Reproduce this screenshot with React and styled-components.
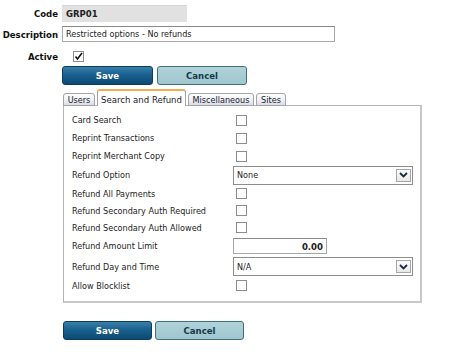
import styled, { createGlobalStyle } from "styled-components";

const GlobalStyle = createGlobalStyle`
	body {
		margin: 0;
		background: #ffffff;
		font-family: "DejaVu Sans Condensed", "Liberation Sans", sans-serif;
		font-size: 9px;
		color: #1e1e1e;
	}
`;

const Page = styled.div`
	width: 451px;
	height: 354px;
	padding-top: 5px;
	box-sizing: border-box;
`;

const Field = styled.div`
	display: flex;
	align-items: center;
	gap: 4px;
	height: ${(props) => props.h}px;
	margin-bottom: ${(props) => props.mb || 0}px;
`;

const Label = styled.label`
	width: 58px;
	text-align: right;
	font-weight: bold;
	font-size: 9.5px;
	color: #111;
`;

const TextBox = styled.div`
	box-sizing: border-box;
	height: 100%;
	width: ${(props) => props.w}px;
	display: flex;
	align-items: center;
	padding: 0 3px;
	background: ${(props) => (props.readOnly ? "#e1e1e1" : "#fff")};
	border: 1px solid ${(props) => (props.readOnly ? "#e1e1e1" : "#a8a8a8")};
	border-top-color: ${(props) => (props.readOnly ? "#d4d4d4" : "#8a8a8a")};
	font-weight: ${(props) => (props.bold ? "bold" : "normal")};
	font-size: ${(props) => (props.bold ? "9.5px" : "9px")};
	color: #222;
	justify-content: ${(props) => (props.right ? "flex-end" : "flex-start")};
`;

const Check = styled.span`
	box-sizing: border-box;
	width: 11px;
	height: 11px;
	margin-left: ${(props) => props.ml || 0}px;
	border: 1px solid #8c8c8c;
	background: #fff;
	display: inline-flex;
	align-items: center;
	justify-content: center;
`;

const Buttons = styled.div`
	display: flex;
	gap: ${(props) => props.gap}px;
	margin-left: ${(props) => props.ml}px;
	height: 19px;
`;

const Button = styled.button`
	box-sizing: border-box;
	width: ${(props) => props.w}px;
	height: 19px;
	border-radius: 3px;
	font-family: inherit;
	font-size: 9.5px;
	font-weight: bold;
	padding: 0;
	cursor: pointer;
	border: 1px solid ${(props) => (props.primary ? "#0b3b5e" : "#3f6f7f")};
	color: ${(props) => (props.primary ? "#ffffff" : "#16384a")};
	background: ${(props) =>
		props.primary
			? "linear-gradient(#3a7fa9, #19608e 45%, #0c4a73)"
			: "linear-gradient(#b0d2d9, #9fc6ce)"};
`;

const Tabs = styled.div`
	margin: 5px 0 0 63px;
	width: 359px;
`;

const TabStrip = styled.div`
	display: flex;
	align-items: flex-end;
	gap: 2px;
	height: 16px;
	position: relative;
	z-index: 1;
	margin-bottom: -1px;
`;

const Tab = styled.div`
	box-sizing: border-box;
	height: ${(props) => (props.active ? 17 : 13)}px;
	width: ${(props) => props.w}px;
	display: flex;
	align-items: center;
	justify-content: center;
	padding-top: ${(props) => (props.active ? 1 : 0)}px;
	font-size: ${(props) => (props.active ? "9.5px" : "9px")};
	color: #1a1a2e;
	border: 1px solid #a4a4a4;
	border-bottom: ${(props) => (props.active ? "none" : "1px solid #a4a4a4")};
	border-top: ${(props) => (props.active ? "2px solid #f2ae55" : "1px solid #a4a4a4")};
	border-radius: 3px 3px 0 0;
	background: ${(props) =>
		props.active ? "#ffffff" : "linear-gradient(#ffffff, #eceef4 60%, #d9dce6)"};
`;

const Panel = styled.div`
	box-sizing: border-box;
	height: 198px;
	border: 1px solid #b4b4b4;
	border-right-width: 2px;
	border-bottom-width: 2px;
	border-bottom-color: #c8c8c8;
	border-right-color: #c8c8c8;
	padding: 5px 0 0 8px;
`;

const Row = styled.div`
	display: flex;
	align-items: center;
	height: ${(props) => props.h}px;
`;

const RowLabel = styled.span`
	width: 161px;
	font-size: 9px;
	color: #1c1c1c;
`;

const Select = styled.div`
	box-sizing: border-box;
	width: 180px;
	height: 19px;
	border: 1px solid #8d8d8d;
	display: flex;
	align-items: center;
	justify-content: space-between;
	padding: 0 1px 0 3px;
	font-size: 9px;
	color: #222;
	background: #fff;
`;

const Arrow = styled.span`
	box-sizing: border-box;
	width: 15px;
	height: 13px;
	border: 1px solid #a6a6a6;
	background: linear-gradient(#fbfbfb, #e8e8e8);
	display: flex;
	align-items: center;
	justify-content: center;
`;

const Footer = styled.div`
	margin-top: 18px;
`;

const rows = [
	{ label: "Card Search", h: 18, type: "check" },
	{ label: "Reprint Transactions", h: 18, type: "check" },
	{ label: "Reprint Merchant Copy", h: 18, type: "check" },
	{ label: "Refund Option", h: 20, type: "select", value: "None" },
	{ label: "Refund All Payments", h: 17, type: "check" },
	{ label: "Refund Secondary Auth Required", h: 17, type: "check" },
	{ label: "Refund Secondary Auth Allowed", h: 17, type: "check" },
	{ label: "Refund Amount Limit", h: 20, type: "amount", value: "0.00" },
	{ label: "Refund Day and Time", h: 21, type: "select", value: "N/A" },
	{ label: "Allow Blocklist", h: 17, type: "check" },
];

function Chevron() {
	return (
		<svg width="9" height="6" viewBox="0 0 9 6">
			<path d="M1 1 L4.5 4.5 L8 1" fill="none" stroke="#1b2a44" strokeWidth="1.8" />
		</svg>
	);
}

function Tick() {
	return (
		<svg width="9" height="9" viewBox="0 0 9 9">
			<path d="M1.5 4.5 L3.5 7 L8 1" fill="none" stroke="#111" strokeWidth="1.6" />
		</svg>
	);
}

function Control({ row }) {
	if (row.type === "select") {
		return (
			<Select>
				{row.value}
				<Arrow>
					<Chevron />
				</Arrow>
			</Select>
		);
	}
	if (row.type === "amount") {
		return (
			<Field h={16}>
				<TextBox w={94} bold right>
					{row.value}
				</TextBox>
			</Field>
		);
	}
	return <Check ml={3} />;
}

export default function App() {
	return (
		<Page>
			<GlobalStyle />
			<Field h={17} mb={4}>
				<Label>Code</Label>
				<TextBox w={125} readOnly bold>
					GRP01
				</TextBox>
			</Field>
			<Field h={16} mb={5}>
				<Label>Description</Label>
				<TextBox w={273}>Restricted options - No refunds</TextBox>
			</Field>
			<Field h={18} mb={1}>
				<Label>Active</Label>
				<Check ml={11}>
					<Tick />
				</Check>
			</Field>
			<Buttons ml={62} gap={4}>
				<Button primary w={91}>
					Save
				</Button>
				<Button w={90}>Cancel</Button>
			</Buttons>
			<Tabs>
				<TabStrip>
					<Tab w={32}>Users</Tab>
					<Tab w={89} active>
						Search and Refund
					</Tab>
					<Tab w={66}>Miscellaneous</Tab>
					<Tab w={30}>Sites</Tab>
				</TabStrip>
				<Panel>
					{rows.map((row) => (
						<Row key={row.label} h={row.h}>
							<RowLabel>{row.label}</RowLabel>
							<Control row={row} />
						</Row>
					))}
				</Panel>
				<Footer>
					<Buttons ml={0} gap={3}>
						<Button primary w={89}>
							Save
						</Button>
						<Button w={89}>Cancel</Button>
					</Buttons>
				</Footer>
			</Tabs>
		</Page>
	);
}
